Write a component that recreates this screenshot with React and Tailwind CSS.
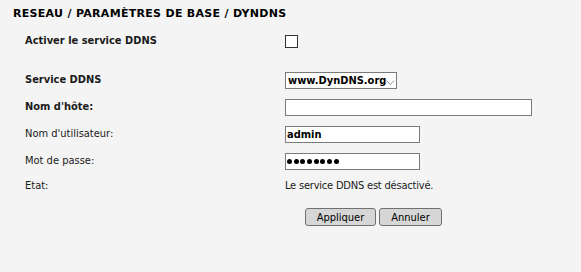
import React from "react";

const font = { fontFamily: '"DejaVu Sans Condensed", "DejaVu Sans", Tahoma, sans-serif' };

function Row({ label, bold, children, h = "h-[27px]" }) {
  return (
    <div className={`flex items-center ${h}`}>
      <div className={`w-[260px] shrink-0 text-[11px] ${bold ? "font-bold" : ""} text-[#1a1a1a]`}>{label}</div>
      <div className="flex items-center">{children}</div>
    </div>
  );
}

export default function App() {
  return (
    <div className="w-[581px] h-[272px] bg-[#f4f4f4] text-black" style={font}>
      <div
        className="pl-[13px] pt-[7px] h-[28px] text-[11px] leading-[14px] font-bold text-black tracking-[0.3px]"
        style={{ fontFamily: '"DejaVu Sans", Tahoma, sans-serif' }}
      >
        RESEAU / PARAMÈTRES DE BASE / DYNDNS
      </div>
      <div className="pl-[25px]">
        <Row label="Activer le service DDNS" bold>
          <div className="w-[13px] h-[13px] border border-[#333333] bg-white" />
        </Row>
        <div className="h-[12px]" />
        <Row label="Service DDNS" bold>
          <div className="w-[112px] h-[17px] border border-[#7a7a7a] bg-white flex items-center justify-between pl-[2px] pr-[1px]">
            <span className="text-[11px] font-bold leading-none">www.DynDNS.org</span>
            <svg width="9" height="6" viewBox="0 0 9 6" className="mt-[4px]">
              <path d="M0.5 0.5 L4.5 4.5 L8.5 0.5" fill="none" stroke="#8a8a8a" strokeWidth="1" />
            </svg>
          </div>
        </Row>
        <Row label="Nom d'hôte:" bold>
          <div className="w-[247px] h-[17px] border border-[#7a7a7a] bg-white" />
        </Row>
        <Row label="Nom d'utilisateur:">
          <div className="w-[135px] h-[17px] border border-[#7a7a7a] bg-white flex items-center pl-[1px]">
            <span className="text-[11px] font-bold leading-none">admin</span>
          </div>
        </Row>
        <Row label="Mot de passe:">
          <div className="w-[135px] h-[17px] border border-[#7a7a7a] bg-white flex items-center pl-[1px] gap-[1.7px]">
            {Array.from({ length: 8 }).map((_, i) => (
              <span key={i} className="block w-[5px] h-[5px] rounded-full bg-black" />
            ))}
          </div>
        </Row>
        <Row label="Etat:" h="h-[23px]">
          <span className="text-[11px] text-[#1a1a1a] tracking-[-0.2px]">Le service DDNS est désactivé.</span>
        </Row>
      </div>
      <div className="flex gap-[3px] pl-[305px] mt-[10px]">
        <button className="w-[71px] h-[18px] rounded-[3px] border border-[#707070] bg-[#d6d6d6] text-[11px] leading-none text-black">
          Appliquer
        </button>
        <button className="w-[63px] h-[18px] rounded-[3px] border border-[#707070] bg-[#d6d6d6] text-[11px] leading-none text-black">
          Annuler
        </button>
      </div>
    </div>
  );
}
